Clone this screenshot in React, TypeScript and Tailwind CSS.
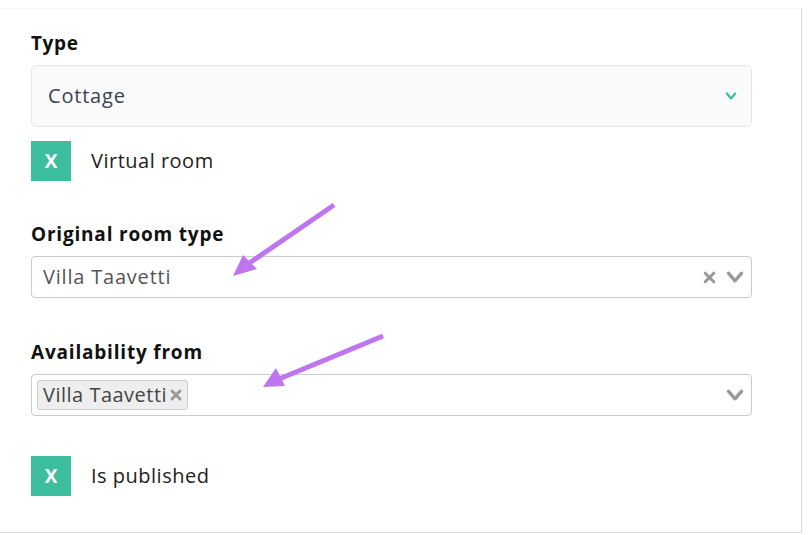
import React from "react";

function Check() {
  return (
    <div className="w-[40px] h-[40px] bg-[#3dbf9f] flex items-center justify-center text-white font-bold text-[19px]">
      X
    </div>
  );
}

function Chevron({ className, sw = 3 }: { className?: string; sw?: number }) {
  return (
    <svg viewBox="0 0 20 20" className={className} fill="none" stroke="currentColor" strokeWidth={sw} strokeLinecap="round" strokeLinejoin="round">
      <path d="M4 6.5 L10 13.5 L16 6.5" />
    </svg>
  );
}

function Cross({ className }: { className?: string }) {
  return (
    <svg viewBox="0 0 20 20" className={className} fill="none" stroke="currentColor" strokeWidth={3.2} strokeLinecap="round">
      <path d="M5.5 5.5 L14.5 14.5 M14.5 5.5 L5.5 14.5" />
    </svg>
  );
}

export default function App() {
  return (
    <div
      className="w-[810px] h-[535px] bg-white relative overflow-hidden"
      style={{ fontFamily: '"Open Sans", "Noto Sans", sans-serif' }}
    >
      <div className="mt-[8px] w-[802px] h-[525px] border-t border-t-[#f6f6f6] border-r border-r-[#d9d9d9] border-b border-b-[#d9d9d9] pl-[31px] pr-[49px]">
        <div className="pt-[21px] text-[19px] font-bold text-[#111] leading-[26px] tracking-[0.6px]">Type</div>
        <div className="mt-[9px] h-[62px] rounded-[6px] border border-[#e6e6e6] bg-[#fafafa] flex items-center justify-between pl-[16px] pr-[13px]">
          <span className="text-[20px] text-[#3a4150] tracking-[0.8px]">Cottage</span>
          <Chevron className="w-[14px] h-[14px] text-[#3dbf9f]" sw={3.2} />
        </div>
        <div className="mt-[14px] flex items-center gap-[20px]">
          <Check />
          <span className="text-[20px] text-[#222] tracking-[0.5px]">Virtual room</span>
        </div>

        <div className="mt-[40px] text-[19px] font-bold text-[#111] leading-[26px] tracking-[0.8px]">Original room type</div>
        <div className="mt-[9px] h-[42px] rounded-[4px] border border-[#cccccc] bg-white flex items-center justify-between pl-[11px] pr-[5px]">
          <span className="text-[20px] text-[#555] tracking-[0.8px]">Villa Taavetti</span>
          <div className="flex items-center gap-[5px] text-[#999]">
            <Cross className="w-[19px] h-[19px]" />
            <Chevron className="w-[22px] h-[22px]" />
          </div>
        </div>

        <div className="mt-[41px] text-[19px] font-bold text-[#111] leading-[26px] tracking-[0.8px]">Availability from</div>
        <div className="mt-[9px] h-[42px] rounded-[4px] border border-[#cccccc] bg-white flex items-center justify-between pl-[5px] pr-[5px]">
          <div className="h-[30px] rounded-[3px] border border-[#cccccc] bg-[#eeeeee] flex items-center pl-[5px] pr-[2px]">
            <span className="text-[20px] text-[#444] tracking-[0.5px]">Villa Taavetti</span>
            <Cross className="w-[18px] h-[18px] text-[#999]" />
          </div>
          <Chevron className="w-[22px] h-[22px] text-[#999]" />
        </div>

        <div className="mt-[40px] flex items-center gap-[20px]">
          <Check />
          <span className="text-[20px] text-[#222] tracking-[0.5px]">Is published</span>
        </div>
      </div>

      <svg className="absolute left-0 top-0 pointer-events-none" width="810" height="535">
        <g stroke="#bf74f0" strokeWidth="5" strokeLinecap="butt" fill="#bf74f0">
          <line x1="334" y1="205" x2="248" y2="264" />
          <polygon points="233,276 243,255 257,269" stroke="none" />
          <line x1="383" y1="336" x2="279" y2="379" />
          <polygon points="263,387 276,368 285,386" stroke="none" />
        </g>
      </svg>
    </div>
  );
}
